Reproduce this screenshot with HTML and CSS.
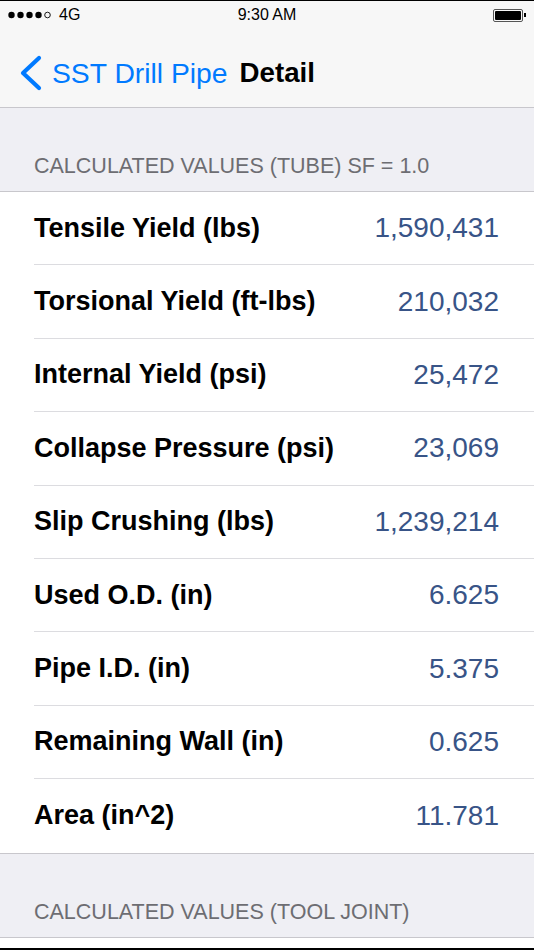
FILE: index.html
```html
<!DOCTYPE html>
<html>
<head>
<meta charset="utf-8">
<link rel="stylesheet" href="styles.css">
</head>
<body>
<div class="screen">
  <div class="topbar">
    <div class="status">
      <div class="carrier">
        <svg class="dots" width="46" height="8" viewBox="0 0 46 8">
          <circle cx="3.5" cy="4" r="3.2" fill="#000"/>
          <circle cx="12.5" cy="4" r="3.2" fill="#000"/>
          <circle cx="21.5" cy="4" r="3.2" fill="#000"/>
          <circle cx="30.5" cy="4" r="3.2" fill="#000"/>
          <circle cx="39.5" cy="4" r="2.8" fill="none" stroke="#000" stroke-width="0.9"/>
        </svg>
        <span class="net">4G</span>
      </div>
      <div class="time">9:30 AM</div>
      <div class="battery"><div class="batt-body"><div class="batt-fill"></div></div><div class="batt-tip"></div></div>
    </div>
    <div class="nav">
      <svg class="chev" width="24" height="36" viewBox="0 0 24 36"><path d="M20 3 L4 18 L20 33" fill="none" stroke="#007aff" stroke-width="4.2" stroke-linecap="round" stroke-linejoin="round"/></svg>
      <span class="back">SST Drill Pipe</span>
      <span class="title">Detail</span>
    </div>
  </div>
  <div class="group-head first">CALCULATED VALUES (TUBE) SF = 1.0</div>
  <div class="list">
    <div class="row"><span class="label">Tensile Yield (lbs)</span><span class="value">1,590,431</span></div>
    <div class="row"><span class="label">Torsional Yield (ft-lbs)</span><span class="value">210,032</span></div>
    <div class="row"><span class="label">Internal Yield (psi)</span><span class="value">25,472</span></div>
    <div class="row"><span class="label">Collapse Pressure (psi)</span><span class="value">23,069</span></div>
    <div class="row"><span class="label">Slip Crushing (lbs)</span><span class="value">1,239,214</span></div>
    <div class="row"><span class="label">Used O.D. (in)</span><span class="value">6.625</span></div>
    <div class="row"><span class="label">Pipe I.D. (in)</span><span class="value">5.375</span></div>
    <div class="row"><span class="label">Remaining Wall (in)</span><span class="value">0.625</span></div>
    <div class="row last"><span class="label">Area (in^2)</span><span class="value">11.781</span></div>
  </div>
  <div class="group-head second">CALCULATED VALUES (TOOL JOINT)</div>
  <div class="list tail"></div>
</div>
</body>
</html>
```
FILE: styles.css
```css
html, body {
  margin: 0;
  padding: 0;
  background: #000;
}
.screen {
  width: 534px;
  height: 947px;
  margin-top: 1px;
  background: #efeff4;
  font-family: "Liberation Sans", Arial, sans-serif;
  overflow: hidden;
  display: flex;
  flex-direction: column;
}
.topbar {
  background: #f7f7f7;
  height: 106px;
  border-bottom: 1px solid #c8c7cc;
  display: flex;
  flex-direction: column;
}
.status {
  height: 28px;
  display: flex;
  align-items: center;
  justify-content: space-between;
  padding: 0 8px 0 8px;
  position: relative;
  font-size: 16px;
  color: #000;
}
.carrier {
  display: flex;
  align-items: center;
  gap: 5px;
}
.dots {
  display: block;
}
.net {
  font-size: 16px;
}
.time {
  position: absolute;
  left: 0;
  right: 0;
  text-align: center;
  font-size: 16px;
}
.battery {
  display: flex;
  align-items: center;
}
.batt-body {
  width: 26px;
  height: 9px;
  border: 1px solid #555;
  border-radius: 2px;
  padding: 1px;
  box-sizing: content-box;
}
.batt-fill {
  width: 100%;
  height: 100%;
  background: #000;
  border-radius: 1px;
}
.batt-tip {
  width: 2px;
  height: 4px;
  background: #000;
  margin-left: 1px;
}
.nav {
  flex: 1;
  display: flex;
  align-items: center;
  padding-left: 19px;
  padding-top: 10px;
}
.chev {
  margin-right: 9px;
}
.back {
  color: #007aff;
  font-size: 28.3px;
}
.title {
  font-size: 27.7px;
  font-weight: bold;
  margin-left: 12px;
  color: #000;
}
.group-head {
  color: #6d6d72;
  font-size: 21.5px;
  padding-left: 34px;
  border-bottom: 1px solid #c8c7cc;
  box-sizing: border-box;
  display: flex;
  align-items: flex-end;
}
.group-head.first {
  height: 84px;
  padding-bottom: 12px;
}
.group-head.second {
  height: 84px;
  padding-bottom: 12px;
}
.list {
  background: #fff;
  border-bottom: 1px solid #c8c7cc;
}
.row {
  height: 73.4px;
  box-sizing: border-box;
  margin-left: 34px;
  padding-right: 35px;
  display: flex;
  align-items: center;
  justify-content: space-between;
  border-bottom: 1px solid #dcdce0;
}
.row.last {
  border-bottom: none;
}
.label {
  font-size: 27px;
  font-weight: bold;
  color: #000;
}
.value {
  font-size: 28px;
  color: #385487;
}
.list.tail {
  flex: 1;
  border-bottom: none;
}
```
